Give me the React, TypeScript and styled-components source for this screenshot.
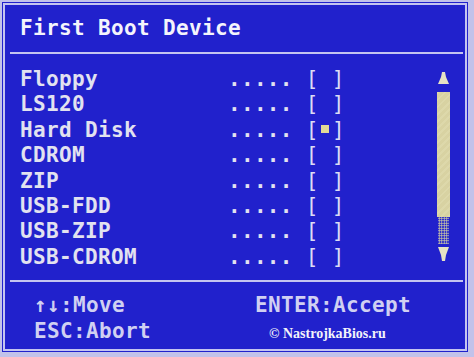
import React from 'react';
import styled, { createGlobalStyle } from 'styled-components';

const BLUE = '#2121cc';
const LINE = '#c4c4f0';
const TEXT = '#e2e2f0';
const BAR = '#d8d2a2';
const MONO = `"DejaVu Sans Mono", "Liberation Mono", monospace`;

const GlobalStyle = createGlobalStyle`
  html, body {
    margin: 0;
    padding: 0;
    background: #c2c2ea;
  }
`;

const Page = styled.div`
  box-sizing: border-box;
  width: 474px;
  height: 357px;
  display: flex;
  padding: 2px 6px 5px 2px;
  background: #c2c2ea;
`;

const Screen = styled.div`
  flex: 1;
  display: flex;
  padding: 1px;
  background: ${BLUE};
`;

const Frame = styled.div`
  flex: 1;
  display: flex;
  flex-direction: column;
  border: 2px solid ${LINE};
  font-family: ${MONO};
  font-size: 21px;
  font-weight: bold;
  letter-spacing: 0.35px;
  color: ${TEXT};
`;

const Title = styled.div`
  padding: 11px 0 12px 15px;
  line-height: 24px;
  color: #f4f4fc;
`;

const Divider = styled.div`
  height: 2px;
  margin: 0 2px 0 5px;
  background: ${LINE};
`;

const Body = styled.div`
  flex: 1;
  display: flex;
  padding-top: 13px;
`;

const List = styled.div`
  flex: 1;
  display: flex;
  flex-direction: column;
  padding-left: 15px;
`;

const Row = styled.div`
  height: 25.4px;
  line-height: 25.4px;
  white-space: pre;
`;

const Bracket = styled.span`
  font-weight: normal;
  color: #dcdcf4;
`;

const Mark = styled.span`
  display: inline-block;
  width: 8px;
  height: 8px;
  margin: 0 2.6px;
  vertical-align: 3.5px;
  background: #e2da96;
`;

const Scroll = styled.div`
  width: 13px;
  margin-right: 15px;
  padding-top: 5px;
  display: flex;
  flex-direction: column;
  align-items: center;
`;

const Arrow = styled.svg`
  display: block;
  fill: #e6e2c4;
`;

const Thumb = styled.div`
  width: 13px;
  height: 125px;
  margin-top: 8px;
  background: repeating-linear-gradient(135deg, #ddd8aa 0 2px, ${BAR} 2px 5px);
`;

const Track = styled.div`
  width: 11px;
  height: 27px;
  margin-bottom: 3px;
  background: radial-gradient(circle, #d2cda4 0.8px, transparent 1px) 0 0 / 2.5px 2.5px;
`;

const Footer = styled.div`
  box-sizing: border-box;
  height: 67px;
  display: grid;
  grid-template-columns: 221px auto;
  align-items: baseline;
  padding: 13px 0 0 29px;
  line-height: 21.5px;
  color: #d0d0f2;
`;

const Copyright = styled.span`
  padding-left: 14px;
  font-family: "Liberation Serif", serif;
  font-size: 14px;
  font-weight: bold;
  letter-spacing: 0;
  color: #f2f2fa;
`;

const devices = ['Floppy', 'LS120', 'Hard Disk', 'CDROM', 'ZIP', 'USB-FDD', 'USB-ZIP', 'USB-CDROM'];
const selected = 'Hard Disk';

const App = () => (
  <Page>
    <GlobalStyle />
    <Screen>
      <Frame>
        <Title>First Boot Device</Title>
        <Divider />
        <Body>
          <List>
            {devices.map((name) => (
              <Row key={name}>
                {name.padEnd(16)}..... <Bracket>[{name === selected ? <Mark /> : ' '}]</Bracket>
              </Row>
            ))}
          </List>
          <Scroll>
            <Arrow width="11" height="12" viewBox="0 0 11 12">
              <polygon points="4,0 7,0 8,5 11,12 0,12 3,5" />
            </Arrow>
            <Thumb />
            <Track />
            <Arrow width="11" height="14" viewBox="0 0 11 14">
              <polygon points="0,0 11,0 8,8 7,14 4,14 3,8" />
            </Arrow>
          </Scroll>
        </Body>
        <Divider />
        <Footer>
          <span>↑↓:Move</span>
          <span>ENTER:Accept</span>
          <span>ESC:Abort</span>
          <Copyright>© NastrojkaBios.ru</Copyright>
        </Footer>
      </Frame>
    </Screen>
  </Page>
);

export default App;
